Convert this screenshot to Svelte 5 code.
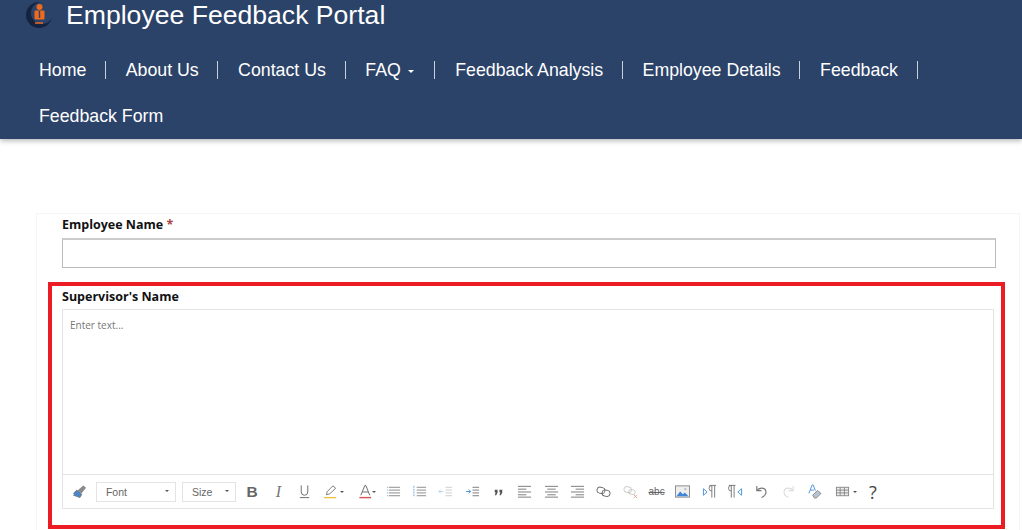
<script>
  const nav = ['Home', 'About Us', 'Contact Us', 'FAQ', 'Feedback Analysis', 'Employee Details', 'Feedback'];
</script>

<header class="top">
  <div class="brand">
    <svg class="logo" viewBox="0 0 30 30" aria-hidden="true">
      <circle cx="15" cy="15" r="13" fill="#14233f" />
      <circle cx="18" cy="13" r="11" fill="#2c4369" />
      <circle cx="15.500" cy="7" r="3" fill="#ee6a1f" />
      <rect x="10.500" y="10.500" width="10" height="9" rx="1" fill="#ee6a1f" />
      <path d="M15.500 11v7" stroke="#2c4369" stroke-width="1.400" />
      <path d="M11 23h8" stroke="#ee6a1f" stroke-width="1.500" />
    </svg>
    <span class="title">Employee Feedback Portal</span>
  </div>
  <nav class="nav">
    {#each nav as item}
      <a class="item" href="#top">{item}{#if item === 'FAQ'}<i class="caret"></i>{/if}</a>
    {/each}
    <a class="item last" href="#top">Feedback Form</a>
  </nav>
</header>

<main class="form">
  <label class="lbl first" for="emp">Employee Name <span class="req">*</span></label>
  <input id="emp" class="text" />

  <section class="marked">
    <div class="lbl">Supervisor's Name</div>
    <div class="editor">
      <div class="area">Enter text...</div>
      <div class="bar">
        <span class="btn"><svg viewBox="0 0 16 16"><path d="M6 7l6-5.500 3 2.500-5 6z" fill="#8a8a8a"/><path d="M5 6.500l5.500 4.500-2 3.500-7-2.500 1.500-1-1.500-1z" fill="#4a86c8" stroke="#666" stroke-width=".7"/></svg></span>
        <span class="sel font">Font<i class="dark"></i></span>
        <span class="sel size">Size<i class="dark"></i></span>
        <span class="btn"><b class="glyph bold">B</b></span>
        <span class="btn"><em class="glyph ital">I</em></span>
        <span class="btn"><svg viewBox="0 0 16 16" fill="none" stroke="#666"><path d="M4.500 1.500v7a3.500 3.500 0 0 0 7 0v-7M3 14.500h10"/></svg></span>
        <span class="btn hl"><svg viewBox="0 0 16 16" fill="none"><path d="M2.500 11.500l1-3.500 6-6 3 2.500-6.500 6z" stroke="#777"/><path d="M0 14.500h13" stroke="#e8c24a" stroke-width="1.500"/></svg><i class="dark hlc"></i></span>
        <span class="btn fc"><svg viewBox="0 0 16 16" fill="none"><path d="M3 12L7.300 1.500h1L12.500 12M4.500 8.500h6.500" stroke="#666"/><path d="M1.500 14.500h12.500" stroke="#d9534f" stroke-width="1.500"/></svg><i class="dark fcc"></i></span>
        <span class="btn"><svg viewBox="0 0 16 16" fill="none" stroke="#888"><path d="M3 3.500h12M3 6.500h12M3 9.500h12M3 12.500h12"/><path d="M1 3.500h1M1 6.500h1M1 9.500h1M1 12.500h1" stroke="#6aa5dc"/></svg></span>
        <span class="btn"><svg viewBox="0 0 16 16" fill="none"><path d="M5 3.500h10M5 6.500h10M5 9.500h10M5 12.500h10" stroke="#888"/><path d="M2 2v12" stroke="#6aa5dc" stroke-dasharray="2 1"/></svg></span>
        <span class="btn"><svg viewBox="0 0 16 16" fill="none"><path d="M8 3.500h7M8 6.500h7M8 9.500h7M8 12.500h7" stroke="#ccc"/><path d="M6 8H1M3 6L1 8l2 2" stroke="#b9d4ee"/></svg></span>
        <span class="btn"><svg viewBox="0 0 16 16" fill="none"><path d="M8 3.500h7M8 6.500h7M8 9.500h7M8 12.500h7" stroke="#777"/><path d="M1 8h5M4 6l2 2-2 2" stroke="#4a90d9"/></svg></span>
        <span class="btn"><svg viewBox="0 0 16 16" fill="#555"><path d="M4 6h3v3.200L5.500 12H4l1-3H4zM9 6h3v3.200L10.500 12H9l1-3H9z"/></svg></span>
        <span class="btn"><svg viewBox="0 0 16 16" fill="none" stroke="#777"><path d="M1 2.500h14M1 5.500h9M1 8.500h14M1 11.500h9M1 14h14"/></svg></span>
        <span class="btn"><svg viewBox="0 0 16 16" fill="none" stroke="#777"><path d="M1 2.500h14M3.500 5.500h9M1 8.500h14M3.500 11.500h9M1 14h14"/></svg></span>
        <span class="btn"><svg viewBox="0 0 16 16" fill="none" stroke="#777"><path d="M1 2.500h14M6 5.500h9M1 8.500h14M6 11.500h9M1 14h14"/></svg></span>
        <span class="btn"><svg viewBox="0 0 16 16" fill="none" stroke="#666"><rect x="1" y="3.500" width="8.500" height="6.500" rx="3.200" transform="rotate(12 5 7)"/><rect x="6.500" y="6.500" width="8.500" height="6.500" rx="3.200" transform="rotate(12 10.500 9.500)"/></svg></span>
        <span class="btn"><svg viewBox="0 0 16 16" fill="none"><rect x="1" y="3" width="8" height="6" rx="3" stroke="#ccc" transform="rotate(12 5 6)"/><rect x="6" y="6" width="7" height="5" rx="2.500" stroke="#ccc" transform="rotate(12 9.500 8.500)"/><path d="M11.500 11.500l3.500 3.500M15 11.500L11.500 15" stroke="#eaa08f"/></svg></span>
        <span class="btn"><span class="abc">abc</span></span>
        <span class="btn"><svg viewBox="0 0 16 16"><rect x=".5" y="2" width="15" height="12" fill="#eee" stroke="#888"/><path d="M1.500 13l4-5 3 3 2-2 4 4z" fill="#3f86d6"/><circle cx="11" cy="5.500" r="1.200" fill="#bbb"/></svg></span>
        <span class="btn"><svg viewBox="0 0 16 16" fill="none"><path d="M8 1.500h7M10.500 1.500v13M13.500 1.500v13M10.500 1.500a3 3 0 0 0 0 6" stroke="#777"/><path d="M1.500 5l4 3.500-4 3.500z" stroke="#4a90d9"/></svg></span>
        <span class="btn"><svg viewBox="0 0 16 16" fill="none"><path d="M1 1.500h7M3.500 1.500v13M6.500 1.500v13M3.500 1.500a3 3 0 0 0 0 6" stroke="#777"/><path d="M14.500 5l-4 3.500 4 3.500z" stroke="#4a90d9"/></svg></span>
        <span class="btn"><svg viewBox="0 0 16 16" fill="none" stroke="#777" stroke-width="1.200"><path d="M3 2v5h5"/><path d="M3 7c2-3 8-4 9.500 0 1 3-1.500 6-4.500 7.500"/></svg></span>
        <span class="btn"><svg viewBox="0 0 16 16" fill="none" stroke="#ddd" stroke-width="1.200"><path d="M13 2v5H8"/><path d="M13 7c-2-3-8-4-9.500 0-1 3 1.500 6 4.500 7.500"/></svg></span>
        <span class="btn"><svg viewBox="0 0 16 16" fill="none"><path d="M2 10L5.500 1h1L9 7M3.500 6.500h4" stroke="#4a90d9"/><path d="M6 12l5-5 4 3-5 5H8z" fill="#b5c4d3" stroke="#666" stroke-width=".7"/></svg></span>
        <span class="btn tb"><svg viewBox="0 0 16 16" fill="none" stroke="#888"><rect x="1.500" y="3.500" width="13" height="9" fill="#eee"/><path d="M1.500 6.500h13M1.500 9.500h13M5.500 3.500v9M10 3.500v9"/></svg><i class="dark tbc"></i></span>
        <span class="help">?</span>
      </div>
    </div>
  </section>
</main>

<style>
  :global(body) {
    margin: 0;
    height: 530px;
    overflow: hidden;
    background: #fff;
    font-family: "Liberation Sans", Arial, sans-serif;
  }
  .top {
    height: 139px;
    background: #2c4369;
    box-shadow: 0 2px 5px rgba(0, 0, 0, .28);
    color: #fff;
  }
  .brand {
    height: 47px;
    display: flex;
    align-items: flex-start;
    padding-left: 24px;
  }
  .logo { width: 30px; height: 30px; flex: none; }
  .title {
    margin-left: 12px;
    font-size: 26.600px;
    line-height: 31px;
  }
  .nav {
    display: flex;
    flex-wrap: wrap;
    padding-left: 19.300px;
  }
  .item {
    position: relative;
    height: 46px;
    line-height: 46px;
    padding: 0 19.700px;
    font-size: 17.760px;
    color: #fff;
    text-decoration: none;
    white-space: nowrap;
  }
  .item::after {
    content: "";
    position: absolute;
    right: 0;
    top: 14px;
    height: 18px;
    width: 1px;
    background: #c9d0da;
  }
  .last { flex-basis: 100%; box-sizing: border-box; }
  .last::after { display: none; }
  .caret {
    display: inline-block;
    margin: 0 1.500px 0 7.500px;
    vertical-align: middle;
    border: 3.500px solid transparent;
    border-top-color: #fff;
    border-bottom: 0;
  }
  .form {
    box-sizing: border-box;
    margin: 74px 2px 0 36px;
    height: 317px;
    padding: 2px 11px 0;
    border: 1px solid #f6f6f6;
    border-bottom: 0;
    font-family: "Open Sans", sans-serif;
  }
  .lbl {
    display: block;
    font-size: 12.500px;
    font-weight: 700;
    line-height: 17px;
    color: #111;
  }
  .first { margin-left: 14px; }
  .req { color: #a94442; }
  .text {
    display: block;
    box-sizing: border-box;
    width: 934px;
    height: 30px;
    margin: 5px 0 14px 14px;
    border: 1px solid #bbb;
    border-top: 2px solid #ccc;
    background: #fff;
    padding: 0;
  }
  .marked {
    box-sizing: border-box;
    width: 957px;
    height: 247px;
    padding: 2px 10px 0;
    border: 4px solid #ec1c24;
  }
  .editor {
    box-sizing: border-box;
    width: 932px;
    height: 200px;
    margin-top: 4px;
    border: 1px solid #e4e4e4;
    display: flex;
    flex-direction: column;
  }
  .area {
    flex: 1;
    padding: 9px 7px;
    font-size: 10px;
    line-height: 13px;
    color: #777;
    border-bottom: 1px solid #e4e4e4;
  }
  .bar {
    height: 33px;
    display: flex;
    align-items: center;
    padding-left: 3.600px;
  }
  .btn {
    position: relative;
    flex: none;
    width: 26.350px;
    height: 20px;
    display: flex;
    align-items: center;
    justify-content: center;
  }
  .btn svg { width: 15px; height: 15px; flex: none; }
  .hl { width: 33px; padding-right: 5px; box-sizing: border-box; }
  .fc { width: 29px; }
  .tb { width: 29px; }
  .glyph { font-family: "Liberation Sans", sans-serif; color: #666; }
  .bold { font-size: 15.500px; font-weight: 700; }
  .ital { font-family: "Liberation Serif", serif; font-size: 16px; color: #777; }
  .abc {
    font-family: "Liberation Sans", sans-serif;
    font-size: 10px;
    color: #666;
    text-decoration: line-through;
  }
  .sel {
    position: relative;
    flex: none;
    box-sizing: border-box;
    height: 20px;
    line-height: 18px;
    border: 1px solid #e4e4e4;
    padding-left: 9px;
    font-family: "Liberation Sans", sans-serif;
    font-size: 10.500px;
    color: #666;
  }
  .font { width: 80px; margin: 0 6px 0 3px; }
  .size { width: 54px; margin-right: 3px; }
  .dark {
    position: absolute;
    right: 6px;
    top: 7px;
    border: 2.500px solid transparent;
    border-top-color: #555;
    border-bottom: 0;
  }
  .hlc { right: 7px; top: 9px; }
  .fcc { right: 4px; top: 9px; }
  .tbc { right: 0; top: 9px; }
  .help {
    flex: none;
    margin-left: 6px;
    width: 20px;
    text-align: center;
    font-family: "Open Sans", sans-serif;
    font-size: 18px;
    line-height: 20px;
    color: #444;
  }
</style>
